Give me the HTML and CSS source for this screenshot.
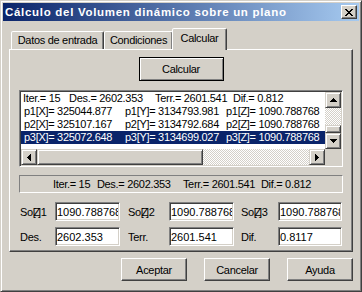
FILE: index.html
```html
<!DOCTYPE html>
<html lang="es">
<head>
    <meta charset="UTF-8">
    <meta name="viewport" content="width=device-width, initial-scale=1.0">
    <title>Cálculo del Volumen dinámico sobre un plano</title>
    <link rel="stylesheet" href="styles.css">
</head>
<body>
    <div class="window">
        <div class="titlebar">
            <span class="title">Cálculo del Volumen dinámico sobre un plano</span>
            <span class="close">
                <svg width="8" height="7" viewBox="0 0 8 7" shape-rendering="crispEdges">
                    <path d="M0 0h2v1h1v1h2v-1h1v-1h2v1h-1v1h-1v1h-1v1h1v1h1v1h1v1h-2v-1h-1v-1h-2v1h-1v1h-2v-1h1v-1h1v-1h1v-1h-1v-1h-1v-1h-1z" fill="#000"/>
                </svg>
            </span>
        </div>
        <div class="client">
            <div class="tabs">
                <div class="tab tab-datos">Datos de entrada</div>
                <div class="tab tab-cond">Condiciones</div>
                <div class="tab tab-calc active">Calcular</div>
            </div>
            <div class="panel">
                <div class="calc-row">
                    <button class="btn default">Calcular</button>
                </div>
                <div class="listbox">
                    <div class="rows">
                        <div class="row first">
                            <span>Iter.= 15</span><span>Des.= 2602.353</span><span>Terr.= 2601.541</span><span>Dif.= 0.812</span>
                        </div>
                        <div class="row">
                            <span>p1[X]= 325044.877</span><span>p1[Y]= 3134793.981</span><span>p1[Z]= 1090.788768</span>
                        </div>
                        <div class="row">
                            <span>p2[X]= 325107.167</span><span>p2[Y]= 3134792.684</span><span>p2[Z]= 1090.788768</span>
                        </div>
                        <div class="row selected">
                            <span>p3[X]= 325072.648</span><span>p3[Y]= 3134699.027</span><span>p3[Z]= 1090.788768</span>
                        </div>
                    </div>
                    <div class="vscroll">
                        <div class="sbtn">
                            <svg width="7" height="4" viewBox="0 0 7 4" shape-rendering="crispEdges"><path d="M3 0h1v1h1v1h1v1h1v1h-7v-1h1v-1h1v-1h1z"/></svg>
                        </div>
                        <div class="track vtrack"><div class="thumb vthumb"></div></div>
                        <div class="sbtn">
                            <svg width="7" height="4" viewBox="0 0 7 4" shape-rendering="crispEdges"><path d="M0 0h7v1h-1v1h-1v1h-1v1h-1v-1h-1v-1h-1v-1h-1z"/></svg>
                        </div>
                    </div>
                    <div class="hscroll">
                        <div class="sbtn">
                            <svg width="4" height="7" viewBox="0 0 4 7" shape-rendering="crispEdges"><path d="M3 0h1v7h-1v-1h-1v-1h-1v-1h-1v-1h1v-1h1v-1h1z"/></svg>
                        </div>
                        <div class="thumb hthumb"></div>
                        <div class="track htrack"></div>
                        <div class="sbtn">
                            <svg width="4" height="7" viewBox="0 0 4 7" shape-rendering="crispEdges"><path d="M0 0h1v1h1v1h1v1h1v1h-1v1h-1v1h-1v1h-1z"/></svg>
                        </div>
                    </div>
                    <div class="corner"></div>
                </div>
                <div class="status">
                    <span>Iter.= 15</span><span>Des.= 2602.353</span><span>Terr.= 2601.541</span><span>Dif.= 0.812</span>
                </div>
                <div class="fields">
                    <label class="lbl">So<span class="zb">[Z]</span>1</label>
                    <input class="field" type="text" value="1090.788768" readonly>
                    <label class="lbl mid">So<span class="zb">[Z]</span>2</label>
                    <input class="field" type="text" value="1090.788768" readonly>
                    <label class="lbl last">So<span class="zb">[Z]</span>3</label>
                    <input class="field" type="text" value="1090.788768" readonly>
                    <label class="lbl">Des.</label>
                    <input class="field" type="text" value="2602.353" readonly>
                    <label class="lbl mid">Terr.</label>
                    <input class="field" type="text" value="2601.541" readonly>
                    <label class="lbl last">Dif.</label>
                    <input class="field" type="text" value="0.8117" readonly>
                </div>
            </div>
            <div class="buttons">
                <button class="btn">Aceptar</button>
                <button class="btn">Cancelar</button>
                <button class="btn">Ayuda</button>
            </div>
        </div>
    </div>
</body>
</html>
```

FILE: styles.css
```css
body {
    margin: 0;
    padding: 0;
    background-color: #d4d0c8;
}
.window {
    width: 362px;
    height: 292px;
    box-sizing: border-box;
    background-color: #d4d0c8;
    border: 1px solid;
    border-color: #d4d0c8 #404040 #404040 #d4d0c8;
    box-shadow: inset 1px 1px #fff, inset -1px -1px #808080;
    padding: 2px;
    font-family: "Liberation Sans", Arial, sans-serif;
    font-size: 11px;
    letter-spacing: -0.3px;
    color: #000;
}
.titlebar {
    height: 18px;
    display: flex;
    align-items: center;
    justify-content: space-between;
    padding: 0 2px;
    background: linear-gradient(to right, #0a246a, #a6caf0);
    color: #fff;
    font-weight: bold;
    font-size: 11.5px;
    letter-spacing: 0.7px;
}
.close {
    width: 16px;
    height: 14px;
    box-sizing: border-box;
    display: flex;
    align-items: center;
    justify-content: center;
    background-color: #d4d0c8;
    border: 1px solid;
    border-color: #fff #404040 #404040 #fff;
    box-shadow: inset -1px -1px #808080;
}
.client {
    padding: 7px 6px 0;
}
.tabs {
    display: flex;
    align-items: flex-end;
    height: 21px;
    padding-left: 2px;
}
.tab {
    height: 18px;
    box-sizing: border-box;
    border: 1px solid;
    border-bottom: none;
    border-color: #fff #404040 transparent #fff;
    border-radius: 2px 2px 0 0;
    box-shadow: inset -1px 0 #808080;
    text-align: center;
    line-height: 17px;
    background-color: #d4d0c8;
}
.tab-datos {
    width: 93px;
}
.tab-cond {
    width: 69px;
}
.tab-calc {
    width: 55px;
    margin-left: -1px;
}
.tab.active {
    height: 22px;
    margin-bottom: -1px;
    line-height: 18px;
    position: relative;
    z-index: 1;
}
.panel {
    border: 1px solid;
    border-color: #fff #404040 #404040 #fff;
    box-shadow: inset -1px -1px #808080;
    padding: 7px 9px 5px;
}
.calc-row {
    display: flex;
    justify-content: center;
}
.btn {
    width: 66px;
    height: 23px;
    box-sizing: border-box;
    padding: 0;
    font: inherit;
    letter-spacing: inherit;
    color: #000;
    background-color: #d4d0c8;
    border: 1px solid;
    border-color: #fff #404040 #404040 #fff;
    box-shadow: inset -1px -1px #808080;
}
.btn.default {
    width: 85px;
    height: 24px;
    border-color: #000;
    box-shadow: inset 1px 1px #fff, inset -1px -1px #808080;
}
.listbox {
    margin-top: 9px;
    height: 77px;
    box-sizing: border-box;
    border: 1px solid;
    border-color: #808080 #fff #fff #808080;
    box-shadow: inset 1px 1px #404040, inset -1px -1px #d4d0c8;
    padding: 1px;
    background-color: #fff;
    display: grid;
    grid-template-columns: 1fr 16px;
    grid-template-rows: 1fr 16px;
}
.rows {
    overflow: hidden;
}
.row {
    height: 13px;
    line-height: 13px;
    white-space: pre;
    padding-left: 3px;
    display: grid;
    grid-template-columns: 101px 101px auto;
}
.row.first {
    padding-left: 2px;
    grid-template-columns: 46px 86px 78px auto;
}
.row.selected {
    background-color: #0a246a;
    color: #fff;
}
.vscroll {
    display: flex;
    flex-direction: column;
}
.sbtn {
    width: 16px;
    height: 16px;
    flex: none;
    box-sizing: border-box;
    display: flex;
    align-items: center;
    justify-content: center;
    background-color: #d4d0c8;
    border: 1px solid;
    border-color: #d4d0c8 #404040 #404040 #d4d0c8;
    box-shadow: inset 1px 1px #fff, inset -1px -1px #808080;
}
.track {
    flex: 1;
    background: repeating-conic-gradient(#fff 0 25%, #d4d0c8 0 50%) 0 0 / 2px 2px;
}
.vtrack {
    display: flex;
    flex-direction: column;
    justify-content: flex-end;
}
.thumb {
    box-sizing: border-box;
    background-color: #d4d0c8;
    border: 1px solid;
    border-color: #d4d0c8 #404040 #404040 #d4d0c8;
    box-shadow: inset 1px 1px #fff, inset -1px -1px #808080;
}
.vthumb {
    height: 8px;
}
.hscroll {
    display: flex;
}
.hthumb {
    width: 166px;
    flex: none;
}
.corner {
    background-color: #d4d0c8;
}
.status {
    margin-top: 8px;
    height: 18px;
    box-sizing: border-box;
    border: 1px solid;
    border-color: #808080 #fff #fff #808080;
    display: flex;
    justify-content: center;
    line-height: 16px;
    white-space: pre;
    padding-left: 2px;
}
.status span:nth-child(1) {
    width: 44px;
}
.status span:nth-child(2) {
    width: 86px;
}
.status span:nth-child(3) {
    width: 78px;
}
.fields {
    margin-top: 9px;
    display: grid;
    grid-template-columns: 36px 65px 49px 65px 44px 64px;
    grid-auto-rows: 19px;
    row-gap: 6px;
    align-items: center;
}
.lbl {
    padding-left: 1px;
}
.lbl.mid {
    padding-left: 8px;
}
.lbl.last {
    padding-left: 7px;
}
.zb {
    letter-spacing: -2.3px;
    margin-right: 2px;
}
.field {
    width: 100%;
    height: 19px;
    box-sizing: border-box;
    margin: 0;
    padding: 0 1px;
    font-family: inherit;
    font-size: 11px;
    letter-spacing: 0;
    color: #000;
    background-color: #fff;
    border: 1px solid;
    border-color: #808080 #fff #fff #808080;
    box-shadow: inset 1px 1px #404040, inset -1px -1px #d4d0c8;
    outline: none;
}
.buttons {
    display: flex;
    justify-content: flex-end;
    gap: 17px;
    margin-top: 6px;
}
```
